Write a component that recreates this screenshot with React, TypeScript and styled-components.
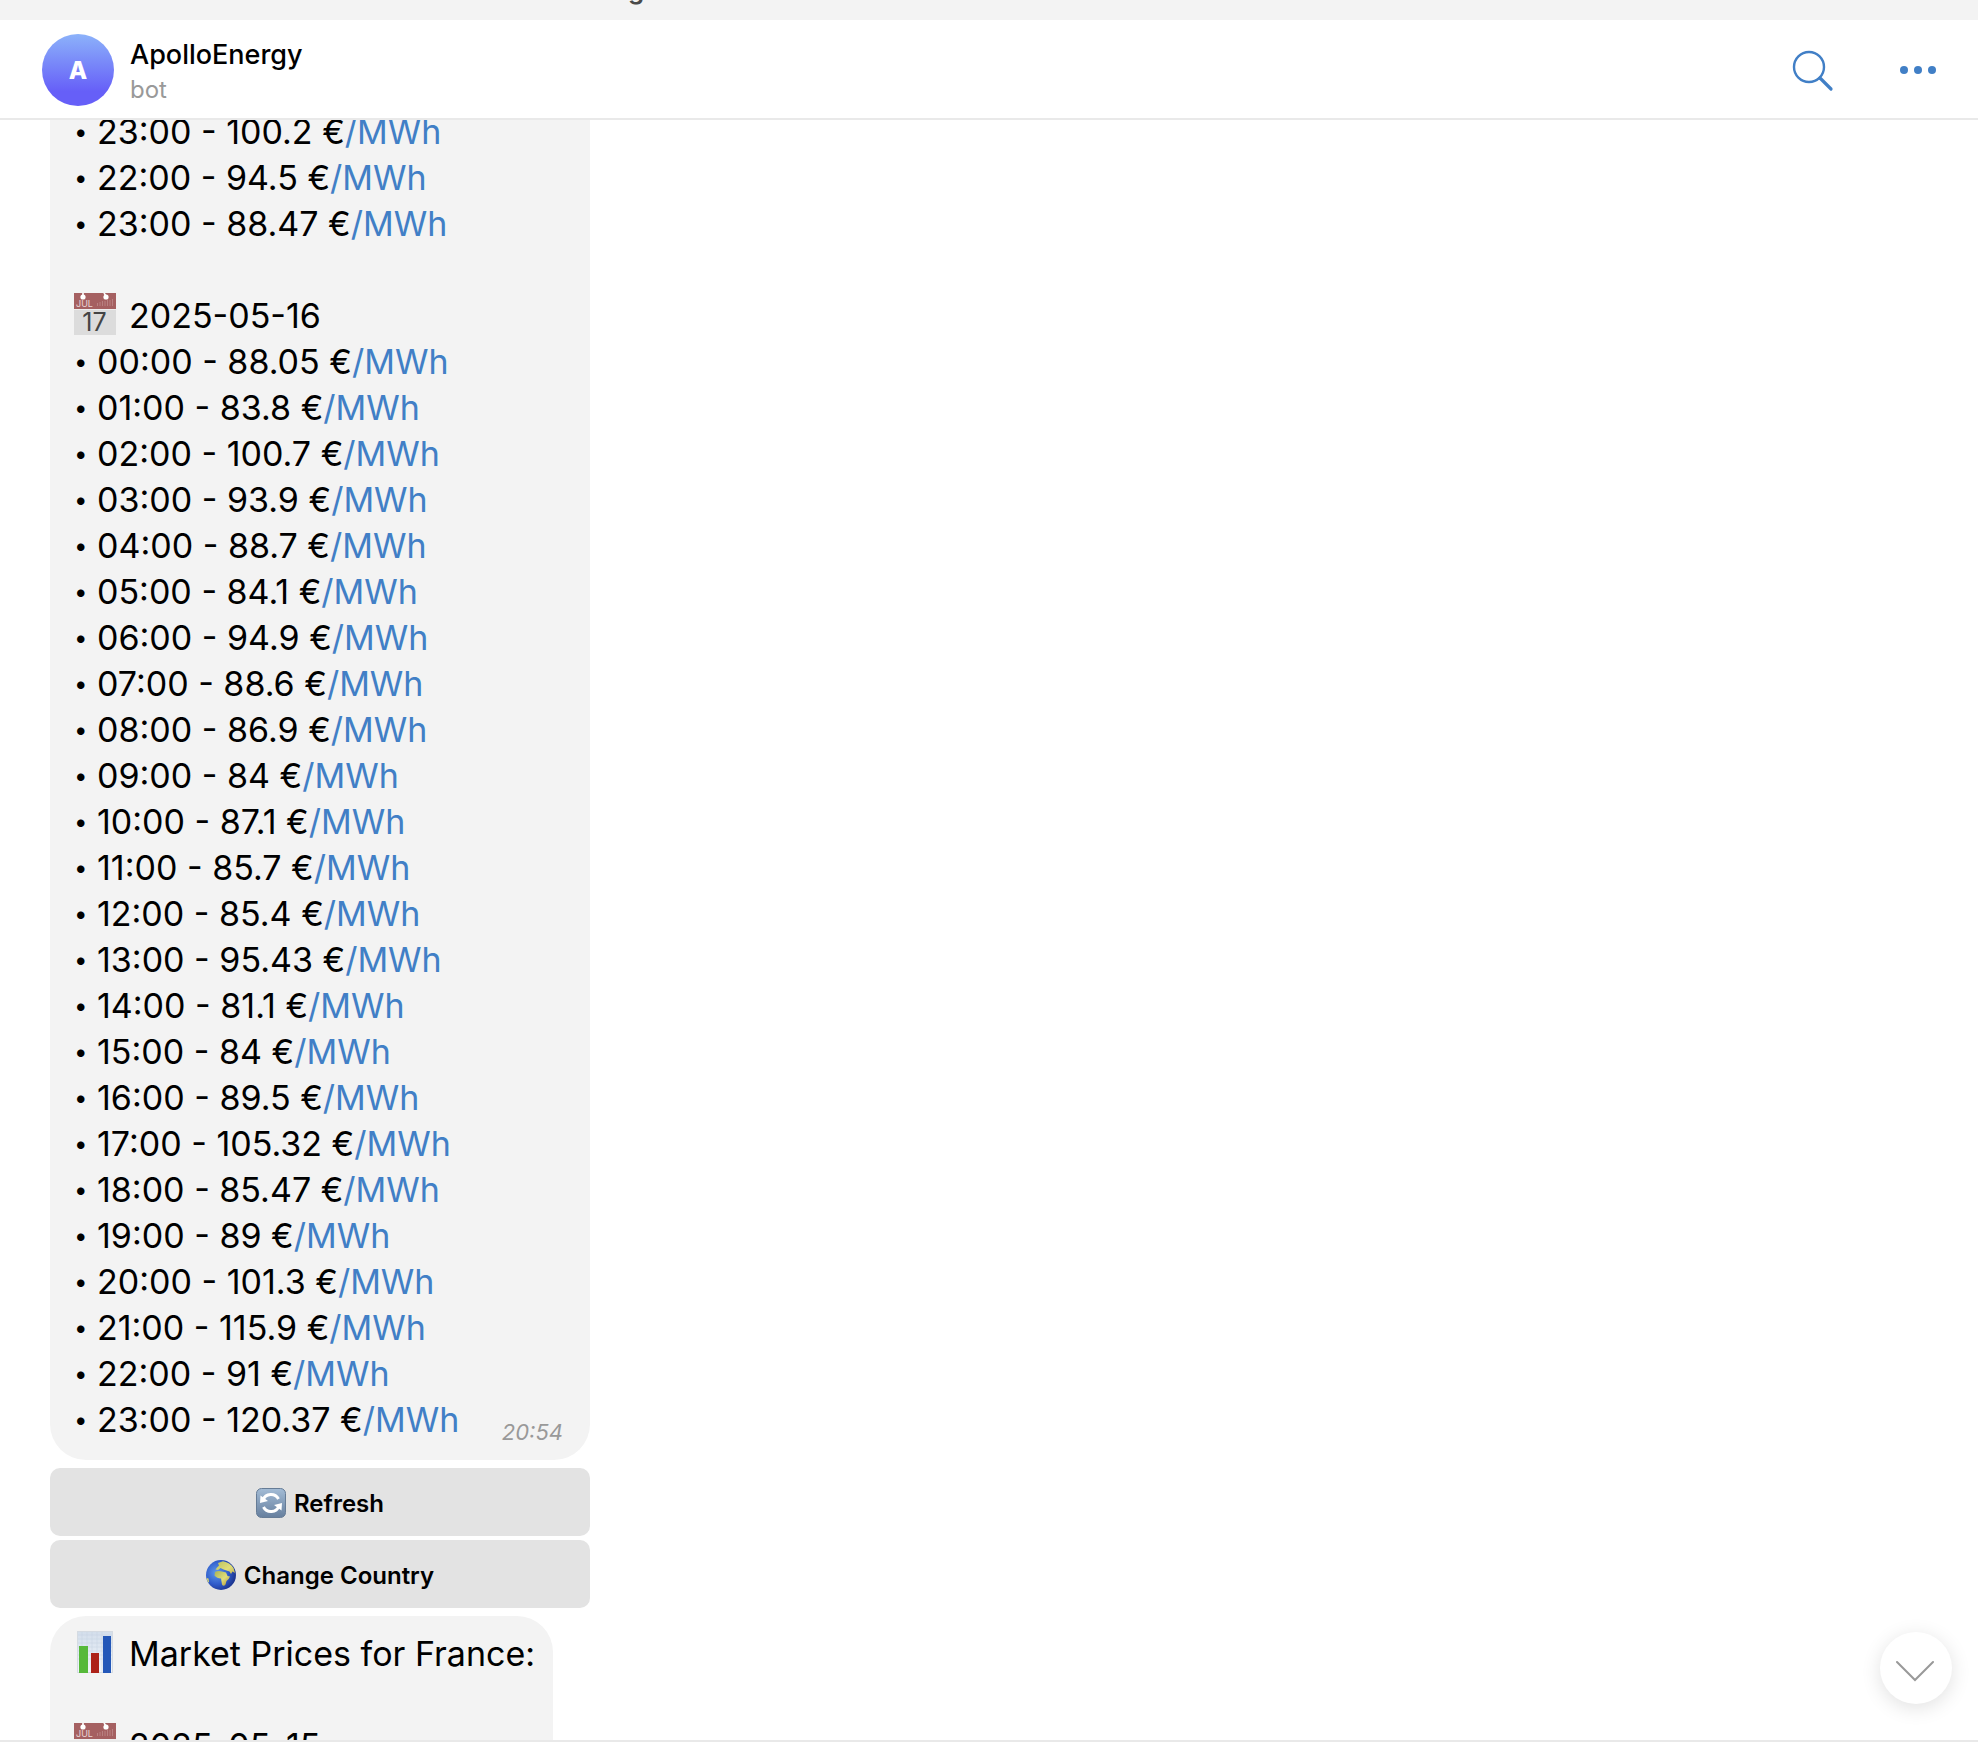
import React from "react";
import styled, { createGlobalStyle } from "styled-components";

const GlobalStyle = createGlobalStyle`
  *, *::before, *::after { box-sizing: border-box; }
  body {
    margin: 0;
    background: #ffffff;
    color: #000000;
    font-family: Inter, "Liberation Sans", sans-serif;
  }
  button { font: inherit; color: inherit; border: 0; padding: 0; cursor: pointer; }
`;

const Page = styled.div`
  display: flex;
  flex-direction: column;
  height: 100vh;
  overflow: hidden;
`;

const TopStrip = styled.div`
  flex: none;
  display: flex;
  align-items: flex-end;
  height: 20px;
  padding-left: 628px;
  overflow: hidden;
  background: #f3f3f3;
  color: #4a4a4a;
  font-size: 26px;
  font-weight: 600;
  line-height: 42px;
`;

const StripText = styled.span`
  margin-bottom: 9px;
`;

const Header = styled.header`
  flex: none;
  display: flex;
  align-items: center;
  height: 100px;
  padding: 2px 38px 0 42px;
  border-bottom: 2px solid #e9e9e9;
`;

const Avatar = styled.div`
  display: flex;
  align-items: center;
  justify-content: center;
  width: 72px;
  height: 72px;
  border-radius: 50%;
  background: linear-gradient(#8cb2fa, #665ff8 80%);
  color: #ffffff;
  font-size: 24px;
  font-weight: 800;
`;

const Identity = styled.div`
  flex: 1;
  margin-left: 16px;
  padding-top: 4px;
`;

const Name = styled.h1`
  margin: 0;
  font-size: 27px;
  font-weight: 500;
  line-height: 36px;
`;

const Status = styled.p`
  margin: 0;
  color: #999999;
  font-size: 24px;
  line-height: 34px;
`;

const Actions = styled.div`
  display: flex;
  gap: 62px;
`;

const IconButton = styled.button`
  display: flex;
  align-items: center;
  justify-content: center;
  width: 44px;
  height: 44px;
  background: none;
`;

const Chat = styled.main`
  position: relative;
  flex: 1;
  min-height: 0;
  overflow: hidden;
`;

const Messages = styled.div`
  display: flex;
  flex-direction: column;
  align-items: flex-start;
  gap: 8px;
  margin-top: -11px;
  padding-left: 50px;
`;

const Group = styled.section`
  display: flex;
  flex-direction: column;
  gap: 8px;
  min-width: 540px;
`;

const Bubble = styled.article<{ $continued?: boolean }>`
  padding: ${(p) => (p.$continued ? "0 18px 17px 24px" : "15px 18px 17px 24px")};
  border-radius: ${(p) => (p.$continued ? "0 0 36px 36px" : "36px")};
  background: #f3f3f3;
  font-size: 34px;
  line-height: 46px;
`;

const Line = styled.p`
  display: flex;
  align-items: flex-start;
  gap: 13px;
  height: 46px;
  margin: 0;
  white-space: pre;
`;

const PriceList = styled.ul`
  margin: 0 0 46px;
  padding: 0;
  list-style: none;

  &:last-child { margin-bottom: 0; }
`;

const PriceRow = styled.li`
  display: flex;
  align-items: flex-end;
  height: 46px;
  white-space: pre;
`;

const Dot = styled.span`
  width: 23px;
  font-size: 24px;
`;

const Unit = styled.a`
  color: #417fc6;
  text-decoration: none;
`;

const Time = styled.time`
  margin-left: auto;
  padding-right: 9px;
  color: #999999;
  font-size: 22px;
  font-style: italic;
  line-height: 22px;
`;

const Keyboard = styled.div`
  display: flex;
  flex-direction: column;
  gap: 4px;
`;

const KeyButton = styled.button`
  && {
    display: flex;
    align-items: center;
    justify-content: center;
    gap: 8px;
    height: 68px;
    padding-top: 2px;
    border-radius: 10px;
    background: #e3e3e3;
    font-size: 24px;
    font-weight: 600;
  }
`;

const ScrollDown = styled.button`
  && {
    position: absolute;
    right: 26px;
    bottom: 36px;
    display: flex;
    align-items: center;
    justify-content: center;
    width: 72px;
    height: 72px;
    border-radius: 50%;
    background: #ffffff;
    box-shadow: 0 4px 20px rgba(0, 0, 0, 0.12);
  }
`;

const Footer = styled.footer`
  flex: none;
  height: 6px;
  border-top: 2px solid #e9e9e9;
`;

function SearchIcon() {
  return (
    <svg width="44" height="44" viewBox="0 0 44 44" fill="none" stroke="#417fc6" strokeLinecap="round" aria-hidden="true">
      <circle cx="19" cy="19" r="15" strokeWidth="2.4" />
      <path d="M30 30 41 41" strokeWidth="3.2" />
    </svg>
  );
}

function MoreIcon() {
  return (
    <svg width="44" height="44" viewBox="0 0 44 44" fill="#417fc6" aria-hidden="true">
      <circle cx="8" cy="22" r="4" />
      <circle cx="22" cy="22" r="4" />
      <circle cx="36" cy="22" r="4" />
    </svg>
  );
}

function CalendarIcon() {
  return (
    <svg width="42" height="42" viewBox="0 0 42 42" aria-hidden="true">
      <rect width="42" height="42" fill="#dcdcdc" />
      <rect width="42" height="16" fill="#a56061" />
      <path d="M0 16.5H42" stroke="#eeeeee" />
      <path d="M9 0V3M30 0 32 3" stroke="#ffffff" strokeWidth="1.6" />
      <circle cx="9" cy="4" r="2.6" fill="#ffffff" />
      <circle cx="32" cy="4" r="2.6" fill="#ffffff" />
      <path d="M23.500 13v-3M26 13v-4M28.500 13v-5M31 13V8M33.500 13V7M36 13V7M38.500 13V6" stroke="#b98182" />
      <text x="2" y="14" fontSize="9" fill="#ead5d5">JUL</text>
      <text x="20.500" y="38" fontSize="25" textAnchor="middle" fill="#444444">17</text>
    </svg>
  );
}

function ChartIcon() {
  return (
    <svg width="42" height="42" viewBox="0 0 42 42" aria-hidden="true">
      <defs>
        <linearGradient id="chartSky" x1="0" y1="0" x2="0" y2="1">
          <stop offset="0" stopColor="#d3deeb" />
          <stop offset="1" stopColor="#f2f6fb" />
        </linearGradient>
      </defs>
      <rect x="3" width="36" height="42" fill="url(#chartSky)" />
      <path d="M3 4H39M3 8H39M3 12H39M3 16H39M3 20H39M3 24H39M3 28H39M8 0V42M13 0V42M18 0V42M23 0V42M28 0V42" stroke="#c6d3e2" strokeWidth="0.5" />
      <rect x="3.500" y="0.500" width="35" height="41" fill="none" stroke="#d5dbe2" />
      <rect x="5" y="15" width="9" height="27" fill="#56b93a" />
      <rect x="17" y="22" width="8" height="20" fill="#ad2219" />
      <rect x="29" y="5" width="8" height="37" fill="#2357b8" />
    </svg>
  );
}

function RefreshIcon() {
  return (
    <svg width="30" height="30" viewBox="0 0 30 30" aria-hidden="true">
      <defs>
        <linearGradient id="refreshTile" x1="0" y1="0" x2="0" y2="1">
          <stop offset="0" stopColor="#a3bcd6" />
          <stop offset="1" stopColor="#667f9e" />
        </linearGradient>
      </defs>
      <rect x="0.500" y="0.500" width="29" height="29" rx="5" fill="url(#refreshTile)" stroke="#667c96" />
      <path d="M7 12A8.500 8.500 0 0 1 22.500 11M23 18A8.500 8.500 0 0 1 7.500 19" fill="none" stroke="#ffffff" strokeWidth="3" />
      <path d="M4 15 4.500 7.500 12 13ZM26 15 25.500 22.500 18 17Z" fill="#ffffff" />
    </svg>
  );
}

function GlobeIcon() {
  return (
    <svg width="30" height="30" viewBox="0 0 30 30" aria-hidden="true">
      <defs>
        <radialGradient id="globeSea" cx="0.35" cy="0.42" r="0.65">
          <stop offset="0" stopColor="#5f9bea" />
          <stop offset="0.6" stopColor="#2f5ccb" />
          <stop offset="1" stopColor="#1c3590" />
        </radialGradient>
        <linearGradient id="globeLand" x1="0" y1="0" x2="1" y2="1">
          <stop offset="0" stopColor="#a9b456" />
          <stop offset="0.55" stopColor="#e0dd78" />
          <stop offset="1" stopColor="#a88f35" />
        </linearGradient>
      </defs>
      <circle cx="15" cy="15" r="15" fill="url(#globeSea)" />
      <path
        d="M9 12Q12 10.500 16 11.500L20 12.500 21.500 16 24 16.500Q23 19.500 20.500 21L19.500 24.500Q17.500 27 16 24.500L15 18.500Q11 18.500 8.500 15.500Z"
        fill="url(#globeLand)"
      />
      <path
        d="M11 7.500 13 5.500 12 3 17 1.200Q24 2.500 27.500 8L29 13 26.500 11.500 25 14 23.500 11.500 20.500 10.500 17.500 9.500 14.500 8 12 10 9.500 9.500ZM0.500 18 2.500 18.500 3 22.500 1.800 22Z"
        fill="url(#globeLand)"
      />
    </svg>
  );
}

function ChevronDown() {
  return (
    <svg width="40" height="28" viewBox="0 0 40 28" fill="none" stroke="#999999" strokeWidth="2" strokeLinecap="round" aria-hidden="true">
      <path d="M1 8 19 26 37 8" />
    </svg>
  );
}

type Price = [hour: string, value: string];

const previousDay: Price[] = [
  ["23:00", "100.2"],
  ["22:00", "94.5"],
  ["23:00", "88.47"],
];

const currentDay: Price[] = [
  ["00:00", "88.05"],
  ["01:00", "83.8"],
  ["02:00", "100.7"],
  ["03:00", "93.9"],
  ["04:00", "88.7"],
  ["05:00", "84.1"],
  ["06:00", "94.9"],
  ["07:00", "88.6"],
  ["08:00", "86.9"],
  ["09:00", "84"],
  ["10:00", "87.1"],
  ["11:00", "85.7"],
  ["12:00", "85.4"],
  ["13:00", "95.43"],
  ["14:00", "81.1"],
  ["15:00", "84"],
  ["16:00", "89.5"],
  ["17:00", "105.32"],
  ["18:00", "85.47"],
  ["19:00", "89"],
  ["20:00", "101.3"],
  ["21:00", "115.9"],
  ["22:00", "91"],
  ["23:00", "120.37"],
];

function Prices({ items, time }: { items: Price[]; time?: string }) {
  return (
    <PriceList>
      {items.map(([hour, value], i) => (
        <PriceRow key={i}>
          <Dot>•</Dot>
          <span>
            {hour} - {value} €<Unit href="#mwh">/MWh</Unit>
          </span>
          {time && i === items.length - 1 && <Time>{time}</Time>}
        </PriceRow>
      ))}
    </PriceList>
  );
}

export default function App() {
  return (
    <>
      <GlobalStyle />
      <Page>
        <TopStrip>
          <StripText>g</StripText>
        </TopStrip>
        <Header>
          <Avatar>A</Avatar>
          <Identity>
            <Name>ApolloEnergy</Name>
            <Status>bot</Status>
          </Identity>
          <Actions>
            <IconButton aria-label="Search">
              <SearchIcon />
            </IconButton>
            <IconButton aria-label="More">
              <MoreIcon />
            </IconButton>
          </Actions>
        </Header>
        <Chat>
          <Messages>
            <Group>
              <Bubble $continued>
                <Prices items={previousDay} />
                <Line>
                  <CalendarIcon />
                  2025-05-16
                </Line>
                <Prices items={currentDay} time="20:54" />
              </Bubble>
              <Keyboard>
                <KeyButton>
                  <RefreshIcon />
                  Refresh
                </KeyButton>
                <KeyButton>
                  <GlobeIcon />
                  Change Country
                </KeyButton>
              </Keyboard>
            </Group>
            <Bubble>
              <Line>
                <ChartIcon />
                Market Prices for France:
              </Line>
              <Line />
              <Line>
                <CalendarIcon />
                2025-05-15
              </Line>
            </Bubble>
          </Messages>
          <ScrollDown aria-label="Scroll to latest message">
            <ChevronDown />
          </ScrollDown>
        </Chat>
        <Footer />
      </Page>
    </>
  );
}
